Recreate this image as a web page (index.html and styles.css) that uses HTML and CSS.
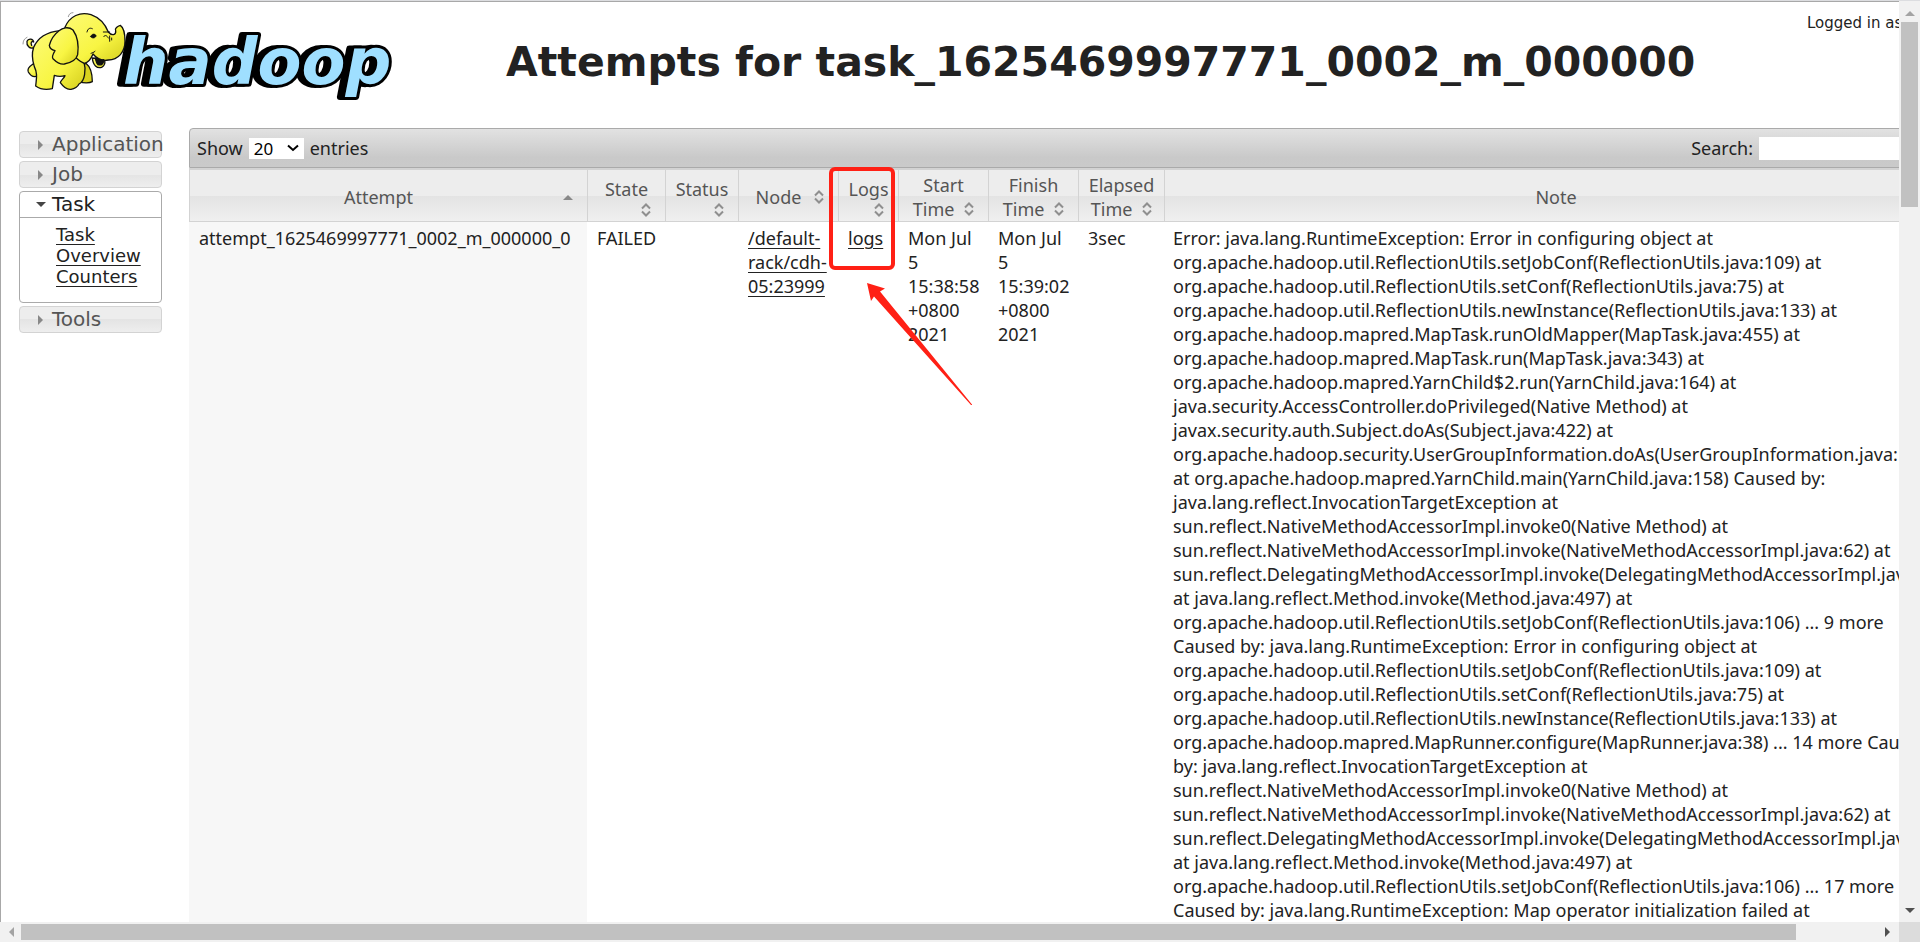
FILE: index.html
```html
<!DOCTYPE html>
<html lang="en">
<head>
<meta charset="utf-8">
<title>Attempts for task_1625469997771_0002_m_000000</title>
<link rel="stylesheet" href="styles.css">
</head>
<body>
<svg class="defs" aria-hidden="true">
  <defs>
    <linearGradient id="skin" x1="0" y1="0" x2="1" y2="1"><stop offset="0" stop-color="#fdfb78"/><stop offset=".6" stop-color="#f8f543"/><stop offset="1" stop-color="#d3cc1c"/></linearGradient>
    <symbol id="sort" viewBox="0 0 10 14"><path d="M1 5.5 5 1.5 9 5.5M1 8.5 5 12.5 9 8.5" fill="none" stroke="#8f8f8f" stroke-width="2"/></symbol>
    <symbol id="up" viewBox="0 0 10 6"><path d="M0 6 5 1 10 6z" fill="currentColor"/></symbol>
    <symbol id="down" viewBox="0 0 10 6"><path d="M0 0H10L5 5z" fill="currentColor"/></symbol>
    <symbol id="left" viewBox="0 0 6 10"><path d="M6 0V10L1 5z" fill="currentColor"/></symbol>
    <symbol id="right" viewBox="0 0 6 10"><path d="M0 0V10L5 5z" fill="currentColor"/></symbol>
  </defs>
</svg>
<div class="window">
  <div class="page">
    <header class="header">
      <a class="logo" href="#" aria-label="Hadoop">
        <svg viewBox="0 0 380 92" width="380" height="92">
          <text class="wordmark" x="105" y="74">hadoop</text>
          <g transform="translate(-3 -2) scale(.3333)" stroke="#111" stroke-width="4" stroke-linejoin="round" stroke-linecap="round" fill="url(#skin)">
            <path d="M58 118C44 126 34 112 36 100 40 90 54 92 56 102 50 98 46 104 50 112"/>
            <path d="M212 165C226 176 232 196 232 221 224 226 206 226 194 222L200 180z" fill="#d8d21e"/>
            <path d="M54 168C42 176 36 184 40 192 48 206 58 208 68 204L74 170z"/>
            <path d="M135 68C96 72 68 90 56 118 48 142 54 164 58 176 66 192 66 204 62 234 76 244 96 246 112 242L118 202C128 206 140 206 150 203 146 212 138 216 136 224 146 238 156 246 168 244 182 242 188 236 192 228 210 220 214 184 206 158L190 80z"/>
            <path d="M232 150C234 172 246 182 260 178 268 174 272 166 268 154z"/>
            <path d="M150 58C164 24 196 10 228 20 256 30 272 52 280 72 290 84 304 82 302 68 298 62 308 54 316 52 328 60 330 78 330 100 330 132 310 156 280 156 260 160 244 150 234 138 230 148 222 164 208 166 196 160 186 156 180 144L140 100z"/>
            <path d="M174 66C160 54 142 60 132 68 114 82 106 100 103 112 104 120 112 126 120 128 112 142 110 148 114 152 124 162 134 170 148 168 170 164 184 156 188 140 192 110 188 86 174 66z"/>
            <path d="M241 150C249 155 258 157 266 155 266 168 259 173 249 170 243 165 243 158 241 150z" fill="#111"/>
            <path d="M227 86C230 76 240 76 244 84 238 92 232 92 227 86z" fill="#111" stroke-width="2"/>
            <path d="M216 72C218 62 224 58 232 62M265 72 284 72M266 86C270 80 276 82 280 90M284 84 284 100M290 90 290 96M228 136C232 134 236 134 240 130" fill="none" stroke-width="3"/>
            <path d="M160 26C162 18 166 14 174 14M24 108C24 98 28 92 36 88" fill="none" stroke="#999" stroke-width="3"/>
          </g>
        </svg>
      </a>
      <h1 class="title">Attempts for task_1625469997771_0002_m_000000</h1>
      <div class="user">Logged in as: dr.who</div>
    </header>
    <div class="body">
      <nav class="nav">
        <button class="nav-head" type="button"><svg class="tri-side"><use href="#right"/></svg>Application</button>
        <button class="nav-head" type="button"><svg class="tri-side"><use href="#right"/></svg>Job</button>
        <div class="nav-open">
          <button class="nav-head nav-head-open" type="button"><svg class="tri-down"><use href="#down"/></svg>Task</button>
          <ul class="nav-list"><li><a href="#">Task Overview</a></li><li><a href="#">Counters</a></li></ul>
        </div>
        <button class="nav-head" type="button"><svg class="tri-side"><use href="#right"/></svg>Tools</button>
      </nav>
      <main class="main">
        <div class="toolbar">
          <label class="length">Show
            <span class="select-wrap"><select><option>20</option><option>50</option></select><svg class="chev" viewBox="0 0 12 8"><path d="M1 1.5 6 6 11 1.5" fill="none" stroke="#000" stroke-width="2"/></svg></span>
            entries</label>
          <label class="search">Search: <input type="text"></label>
        </div>
        <table class="table">
          <colgroup><col class="c-attempt"><col class="c-state"><col class="c-status"><col class="c-node"><col class="c-logs"><col class="c-time"><col class="c-time"><col class="c-elapsed"><col></colgroup>
          <thead><tr>
            <th><div class="th th-sorted"><span>Attempt</span><svg class="tri-up"><use href="#up"/></svg></div></th>
            <th><div class="th th-stack"><span>State</span><svg class="sort"><use href="#sort"/></svg></div></th>
            <th><div class="th th-stack"><span>Status</span><svg class="sort"><use href="#sort"/></svg></div></th>
            <th><div class="th"><span>Node</span><svg class="sort"><use href="#sort"/></svg></div></th>
            <th><div class="th th-stack"><span>Logs</span><svg class="sort"><use href="#sort"/></svg></div></th>
            <th><div class="th-two">Start<br>Time <svg class="sort"><use href="#sort"/></svg></div></th>
            <th><div class="th-two">Finish<br>Time <svg class="sort"><use href="#sort"/></svg></div></th>
            <th><div class="th-two">Elapsed<br>Time <svg class="sort"><use href="#sort"/></svg></div></th>
            <th class="th-note">Note</th>
          </tr></thead>
          <tbody><tr>
            <td class="sorted">attempt_1625469997771_0002_m_000000_0</td>
            <td>FAILED</td>
            <td></td>
            <td><a href="#">/default-<br>rack/cdh-<br>05:23999</a></td>
            <td class="logs-cell"><a href="#">logs</a>
              <svg class="mark" width="144" height="240" viewBox="0 0 144 240" aria-hidden="true"><rect x="2" y="2" width="62" height="99" rx="4" fill="none" stroke="#ff2015" stroke-width="4"/><path d="M38 116 56 121.500 51 124.500 143 237.500 143 238 142 238 45 129.500 42 134z" fill="#ff2015"/></svg></td>
            <td>Mon Jul<br>5<br>15:38:58<br>+0800<br>2021</td>
            <td>Mon Jul<br>5<br>15:39:02<br>+0800<br>2021</td>
            <td>3sec</td>
            <td class="note">Error: java.lang.RuntimeException: Error in configuring object at
org.apache.hadoop.util.ReflectionUtils.setJobConf(ReflectionUtils.java:109) at
org.apache.hadoop.util.ReflectionUtils.setConf(ReflectionUtils.java:75) at
org.apache.hadoop.util.ReflectionUtils.newInstance(ReflectionUtils.java:133) at
org.apache.hadoop.mapred.MapTask.runOldMapper(MapTask.java:455) at
org.apache.hadoop.mapred.MapTask.run(MapTask.java:343) at
org.apache.hadoop.mapred.YarnChild$2.run(YarnChild.java:164) at
java.security.AccessController.doPrivileged(Native Method) at
javax.security.auth.Subject.doAs(Subject.java:422) at
org.apache.hadoop.security.UserGroupInformation.doAs(UserGroupInformation.java:1698)
at org.apache.hadoop.mapred.YarnChild.main(YarnChild.java:158) Caused by:
java.lang.reflect.InvocationTargetException at
sun.reflect.NativeMethodAccessorImpl.invoke0(Native Method) at
sun.reflect.NativeMethodAccessorImpl.invoke(NativeMethodAccessorImpl.java:62) at
sun.reflect.DelegatingMethodAccessorImpl.invoke(DelegatingMethodAccessorImpl.java:43)
at java.lang.reflect.Method.invoke(Method.java:497) at
org.apache.hadoop.util.ReflectionUtils.setJobConf(ReflectionUtils.java:106) ... 9 more
Caused by: java.lang.RuntimeException: Error in configuring object at
org.apache.hadoop.util.ReflectionUtils.setJobConf(ReflectionUtils.java:109) at
org.apache.hadoop.util.ReflectionUtils.setConf(ReflectionUtils.java:75) at
org.apache.hadoop.util.ReflectionUtils.newInstance(ReflectionUtils.java:133) at
org.apache.hadoop.mapred.MapRunner.configure(MapRunner.java:38) ... 14 more Caused
by: java.lang.reflect.InvocationTargetException at
sun.reflect.NativeMethodAccessorImpl.invoke0(Native Method) at
sun.reflect.NativeMethodAccessorImpl.invoke(NativeMethodAccessorImpl.java:62) at
sun.reflect.DelegatingMethodAccessorImpl.invoke(DelegatingMethodAccessorImpl.java:43)
at java.lang.reflect.Method.invoke(Method.java:497) at
org.apache.hadoop.util.ReflectionUtils.setJobConf(ReflectionUtils.java:106) ... 17 more
Caused by: java.lang.RuntimeException: Map operator initialization failed at</td>
          </tr></tbody>
        </table>
      </main>
    </div>
  </div>
  <div class="vbar"><svg class="tri-up pale"><use href="#up"/></svg><div class="vtrack"><div class="vthumb"></div></div><svg class="tri-down"><use href="#down"/></svg></div>
  <div class="hbar"><svg class="tri-side pale"><use href="#left"/></svg><div class="htrack"><div class="hthumb"></div></div><svg class="tri-side"><use href="#right"/></svg></div>
  <div class="corner"></div>
</div>
</body>
</html>
```
FILE: styles.css
```css
* { box-sizing: border-box; }
body { margin: 0; background: #fff; color: #222; font-family: "Noto Sans", "Open Sans", sans-serif; font-size: 18px; line-height: 24px; }
a { color: #222; text-decoration: underline; text-underline-offset: 3px; text-decoration-thickness: 1px; }
.defs { position: absolute; width: 0; height: 0; }

.window { display: grid; grid-template: minmax(0, 1fr) 20px / minmax(0, 1fr) 21px; height: 100vh; overflow: hidden; border-top: 1px solid #dcdde0; }
.page { overflow: hidden; border-top: 1px solid #a8a8a8; border-left: 1px solid #a8a8a8; }

.header { display: grid; grid-template-columns: 396px 1fr auto; width: calc(100% + 88px); height: 126px; }
.logo { padding: 8px 0 0 17px; height: 100px; }
.logo svg { display: block; overflow: visible; }
.wordmark { font: italic bold 64px "DejaVu Sans", sans-serif; fill: #9fdfff; stroke: #000; stroke-width: 6px; stroke-linejoin: round; paint-order: stroke; filter: drop-shadow(-5px 0 0 #000); }
.title { margin: 35px 0 0 109px; font: bold 41px/50px "DejaVu Sans", sans-serif; white-space: nowrap; }
.user { padding: 11px 0 0; width: 180px; font: 15px/20px "DejaVu Sans", sans-serif; white-space: nowrap; }

.body { display: flex; align-items: flex-start; width: calc(100% + 88px); }
.nav { flex: none; display: flex; flex-direction: column; gap: 3px; width: 143px; margin: 3px 27px 0 18px; font-family: "DejaVu Sans", sans-serif; }
.nav-head { display: flex; align-items: center; gap: 8px; width: 100%; height: 27px; padding: 0 0 0 18px; border: 1px solid #d3d3d3; border-radius: 4px; background: linear-gradient(#ededed 50%, #e4e4e4 50%, #eee); color: #555; font: 20px/25px "DejaVu Sans", sans-serif; white-space: nowrap; }
.nav-open { border: 1px solid #aaa; border-radius: 4px; }
.nav-head-open { height: 26px; gap: 6px; padding-left: 16px; border-width: 0 0 1px; border-color: #aaa; border-radius: 0; background: none; color: #212121; }
.nav-list { margin: 0; padding: 6px 16px 15px 36px; list-style: none; font-size: 18px; line-height: 21px; }
svg.tri-side { flex: none; width: 6px; height: 10px; color: #888; }
svg.tri-down { flex: none; width: 10px; height: 6px; color: #454545; }
svg.tri-up { flex: none; width: 10px; height: 6px; color: #888; }

.main { flex: 1; min-width: 0; margin-right: 32px; }
.toolbar { display: flex; justify-content: space-between; align-items: center; height: 40px; padding: 0 7px; border: 1px solid #aaa; border-radius: 4px 4px 0 0; background: linear-gradient(#e2e2e2, #c9c9c9 75%, #cacaca); }
.length, .search { display: flex; align-items: center; gap: 6px; }
.select-wrap { display: inline-grid; align-items: center; }
.select-wrap select { grid-area: 1 / 1; width: 55px; height: 21px; padding: 0 5px; appearance: none; border: 0; border-radius: 0; background: #fff; color: #000; font: 17px/21px "Noto Sans", sans-serif; }
.chev { grid-area: 1 / 1; justify-self: end; width: 12px; height: 8px; margin-right: 5px; pointer-events: none; }
.search input { width: 188px; height: 23px; border: 0; background: #fff; font: inherit; }

.table { width: 100%; table-layout: fixed; border-collapse: separate; border-spacing: 0; }
.c-attempt { width: 398px; } .c-state { width: 78px; } .c-status { width: 73px; } .c-node { width: 100px; } .c-logs { width: 60px; } .c-time { width: 90px; } .c-elapsed { width: 86px; }
th { height: 54px; padding: 2px 0 0; border: 1px solid #d3d3d3; border-width: 2px 0 1px 1px; background: linear-gradient(#ededed 50%, #e3e3e3 50%, #f0f0f0); color: #555; font-weight: normal; vertical-align: middle; }
.th { display: grid; grid-template-columns: 1fr 10px; align-items: center; padding: 0 14px 0 4px; }
.th-stack { display: flex; flex-direction: column; gap: 2px; padding: 0 8px; }
.th-stack .sort { align-self: flex-end; margin-right: 6px; }
.sort { width: 10px; height: 14px; }
.th-two { line-height: 24px; }
.th-two .sort { margin-left: 5px; }
.th-note { padding-right: 8px; }
td { padding: 4px 9px 4px 10px; vertical-align: top; white-space: nowrap; }
.sorted { background: #f7f7f7; }
.note { padding-left: 9px; white-space: pre; }
.logs-cell { position: relative; }
.mark { position: absolute; left: -9px; top: -55px; z-index: 1; }

.vbar, .hbar { display: flex; align-items: center; background: #f1f1f1; }
.vbar { flex-direction: column; padding: 9px 0 8px; }
.vtrack { flex: 1; align-self: stretch; padding: 6px 2px; }
.vthumb { height: 21%; background: #c1c1c1; }
.hbar { padding: 0 8px; }
.htrack { flex: 1; align-self: stretch; padding: 2px 7px; }
.hthumb { width: 95.6%; height: 100%; background: #c1c1c1; }
.hbar svg, .vbar svg { color: #505050; }
.vbar svg.pale, .hbar svg.pale { color: #a3a3a3; }
.corner { background: #dcdcdc; }
```
